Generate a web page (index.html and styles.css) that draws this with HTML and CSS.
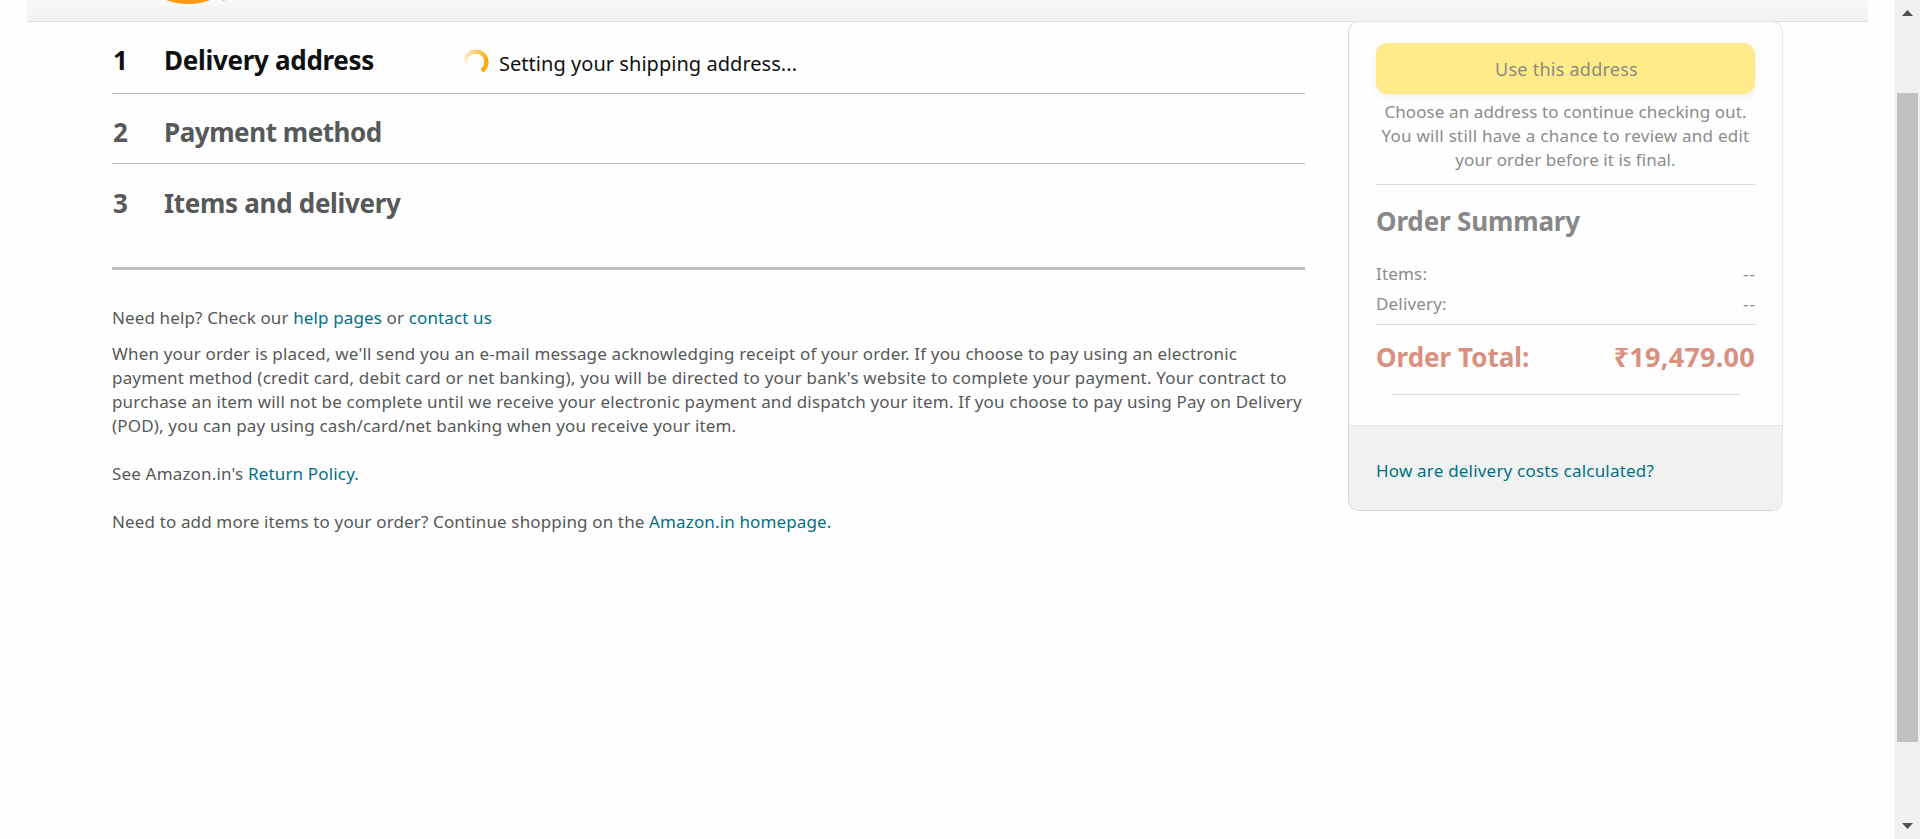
FILE: index.html
```html
<!DOCTYPE html>
<html lang="en">
<head>
<meta charset="utf-8">
<title>Checkout</title>
<link rel="stylesheet" href="styles.css">
</head>
<body>
<div class="page">
  <header class="header">
    <svg class="logo" width="80" height="6" viewBox="0 0 80 6">
      <path d="M6 0C19 5.2 37 5.4 50 0Z" fill="#ff9a16"/>
      <path d="M62.5 0h3l-1.5.9h-1.5z" fill="#fbb981"/>
    </svg>
  </header>
  <div class="content">
    <main class="main">
      <section class="step step-active">
        <h2 class="num">1</h2>
        <h2 class="title">Delivery address</h2>
        <div class="status"><span class="spinner"></span><span class="status-text">Setting your shipping address...</span></div>
      </section>
      <section class="step step-payment">
        <h2 class="num">2</h2>
        <h2 class="title title-payment">Payment method</h2>
      </section>
      <section class="step step-items">
        <h2 class="num">3</h2>
        <h2 class="title">Items and delivery</h2>
      </section>
      <div class="help">
        <p class="help-line">Need help? Check our <a href="#">help pages</a> or <a href="#">contact us</a></p>
        <p class="terms">When your order is placed, we'll send you an e-mail message acknowledging receipt of your order. If you choose to pay using an electronic<br><span class="terms-wide">payment method (credit card, debit card or net banking), you will be directed to your bank's website to complete your payment. Your contract to</span><br>purchase an item will not be complete until we receive your electronic payment and dispatch your item. If you choose to pay using Pay on Delivery<br>(POD), you can pay using cash/card/net banking when you receive your item.</p>
        <p class="terms">See Amazon.in's <a href="#">Return Policy.</a></p>
        <p class="terms terms-shop">Need to add more items to your order? Continue shopping on the <a href="#">Amazon.in homepage.</a></p>
      </div>
    </main>
    <aside class="card">
      <div class="card-body">
        <button class="primary">Use this address</button>
        <p class="note">Choose an address to continue checking out.<br><span class="note-wide">You will still have a chance to review and edit</span><br>your order before it is final.</p>
        <h3 class="summary-title">Order Summary</h3>
        <div class="row"><span>Items:</span><span class="dashes">--</span></div>
        <div class="row row-delivery"><span>Delivery:</span><span class="dashes">--</span></div>
        <div class="total"><span>Order Total:</span><span class="amount">₹19,479.00</span></div>
        <div class="rule"></div>
      </div>
      <div class="card-footer"><a href="#">How are delivery costs calculated?</a></div>
    </aside>
  </div>
</div>
<div class="scrollbar">
  <svg width="11" height="6" viewBox="0 0 11 6"><path d="M5.5 0L11 6H0z" fill="#505050"/></svg>
  <div class="thumb"></div>
  <svg class="down" width="11" height="6" viewBox="0 0 11 6"><path d="M0 0h11L5.5 6z" fill="#505050"/></svg>
</div>
</body>
</html>
```
FILE: styles.css
```css
* { box-sizing: border-box; margin: 0; padding: 0; }
body {
  display: flex;
  width: 1920px;
  height: 839px;
  overflow: hidden;
  background: #fefefe;
  color: #565959;
  font: 17px/24px "Noto Sans", sans-serif;
  letter-spacing: 0.17px;
}
a { color: #007185; text-decoration: none; }

.page { flex: 1; }
.header {
  width: 1841px;
  height: 22px;
  margin-left: 27px;
  padding-left: 133px;
  background: linear-gradient(#f9f9f9, #f1f1f1);
  border-bottom: 1px solid #dcdcdc;
}
.logo { display: block; }
.content { display: flex; align-items: flex-start; padding-left: 112px; }
.main { width: 1193px; margin-right: 43px; }

.step {
  display: flex;
  height: 72px;
  padding-top: 20px;
  border-bottom: 1px solid #b7baba;
}
.step h2, .summary-title, .total {
  font-size: 26px;
  line-height: 36px;
  font-weight: 700;
  letter-spacing: -0.3px;
}
.step .num { width: 52px; padding-left: 1px; }
.title { width: 299px; white-space: nowrap; }
.step .title-payment { letter-spacing: -0.45px; }
.step-active { color: #0f1111; }
.step-payment { height: 70px; }
.step-items {
  height: 106px;
  padding-top: 21px;
  border-bottom: 3px solid #babfbf;
}
.status { display: flex; padding-top: 7px; letter-spacing: 0.04px; }
.status-text { padding-top: 1px; font-size: 20px; line-height: 28px; }
.spinner {
  width: 26px;
  height: 26px;
  margin-right: 10px;
  border-radius: 50%;
  background: conic-gradient(from 245deg, rgba(254,172,13,0) 0, rgba(254,172,13,.75) 150deg, #feac0d 190deg, #feac0d 260deg, transparent 263deg);
  -webkit-mask: radial-gradient(circle, transparent 7.8px, #000 8.6px 12.3px, transparent 13px);
  mask: radial-gradient(circle, transparent 7.8px, #000 8.6px 12.3px, transparent 13px);
}

.help { padding-top: 36px; white-space: nowrap; }
.help-line { margin-bottom: 12px; letter-spacing: 0.13px; }
.terms { margin-bottom: 24px; }
.terms-wide { letter-spacing: 0.19px; }
.terms-shop { letter-spacing: 0.14px; }

.card {
  width: 435px;
  height: 490px;
  margin-top: -1px;
  border: 1px solid #d5d9d9;
  border-top-color: #e3e5e5;
  border-right-color: #e6e8e8;
  border-radius: 11px;
  overflow: hidden;
  display: flex;
  flex-direction: column;
}
.card-body {
  height: 404px;
  padding: 21px 27px 0;
  color: #8a8c8c;
  border-bottom: 1px solid #e6e8e8;
}
.primary {
  display: block;
  width: 379px;
  height: 51px;
  padding-left: 2px;
  border: 1px solid #fde88a;
  border-radius: 11px;
  background: #ffeb8a;
  box-shadow: 0 3px 6px rgba(213, 217, 217, .35);
  color: #8a8b85;
  font: 18px/24px "Noto Sans", sans-serif;
  letter-spacing: 0.25px;
}
.note {
  padding: 6px 0 12px;
  text-align: center;
  white-space: nowrap;
  letter-spacing: 0.1px;
  border-bottom: 1px solid #dbdddd;
}
.note-wide { letter-spacing: 0.24px; }
.summary-title { padding: 18px 0 23px; box-sizing: content-box; color: #878889; letter-spacing: -0.15px; }
.row { display: flex; justify-content: space-between; margin-bottom: 6px; }
.row-delivery { margin-bottom: 8px; }
.dashes { letter-spacing: 1px; margin-right: -1px; }
.total {
  display: flex;
  justify-content: space-between;
  padding-top: 14px;
  border-top: 1px solid #dbdddd;
  color: #d9907e;
  letter-spacing: 0;
}
.amount { font-size: 27px; letter-spacing: 0.25px; }
.rule { height: 1px; margin: 19px 15px 0; background: #dbdddd; }
.card-footer { flex: 1; padding: 33px 27px 0; background: #f0f2f2; letter-spacing: 0.2px; }

.scrollbar {
  display: flex;
  flex-direction: column;
  align-items: center;
  width: 25px;
  padding: 10px 0;
  background: #f0f0f0;
}
.thumb { width: 21px; height: 649px; margin-top: 77px; background: #c0c0c0; }
.down { margin-top: auto; }
```
